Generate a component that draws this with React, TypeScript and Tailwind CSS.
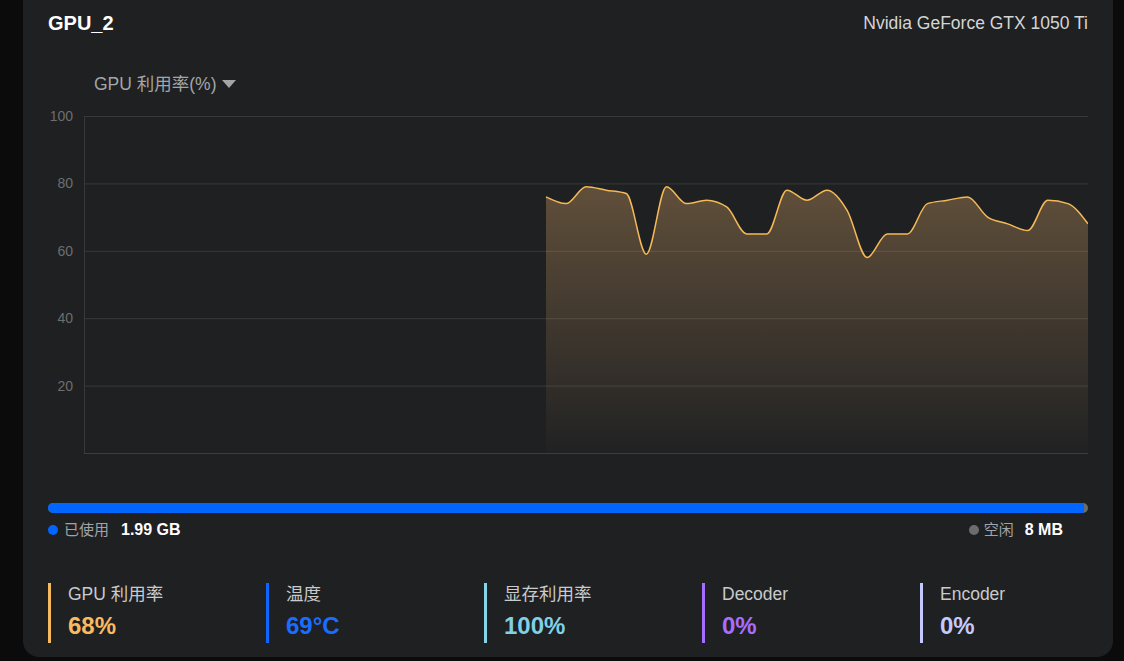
import React from "react";

const FONT = { fontFamily: '"Liberation Sans", Arial, "Noto Sans CJK SC", sans-serif' };

// GPU usage samples (%), newest on the right
const usage = [
    76, 74, 79, 78, 77, 59, 79, 74, 75, 73, 65, 65, 78, 75, 78, 72, 58, 65, 65, 74, 75, 76, 70, 68, 66, 75, 74, 68,
];

const W = 1040;
const H = 360;
const PLOT_L = 36;
const PLOT_T = 12;
const PLOT_B = 349;
const DATA_X0 = 498;

function yOf(v: number) {
    return PLOT_B - (v / 100) * (PLOT_B - PLOT_T);
}

// monotone cubic interpolation, same idea as d3.curveMonotoneX
function monotonePath(pts: [number, number][]) {
    const n = pts.length;
    const sign = (x: number) => (x < 0 ? -1 : 1);
    const t: number[] = new Array(n).fill(0);
    for (let i = 1; i < n - 1; i++) {
        const [x0, y0] = pts[i - 1];
        const [x1, y1] = pts[i];
        const [x2, y2] = pts[i + 1];
        const h0 = x1 - x0;
        const h1 = x2 - x1;
        const s0 = (y1 - y0) / h0;
        const s1 = (y2 - y1) / h1;
        const p = (s0 * h1 + s1 * h0) / (h0 + h1);
        t[i] = (sign(s0) + sign(s1)) * Math.min(Math.abs(s0), Math.abs(s1), 0.5 * Math.abs(p)) || 0;
    }
    const h = pts[1][0] - pts[0][0];
    t[0] = (3 * (pts[1][1] - pts[0][1]) / h - t[1]) / 2;
    const hl = pts[n - 1][0] - pts[n - 2][0];
    t[n - 1] = (3 * (pts[n - 1][1] - pts[n - 2][1]) / hl - t[n - 2]) / 2;

    let d = `M${pts[0][0]},${pts[0][1]}`;
    for (let i = 0; i < n - 1; i++) {
        const [x0, y0] = pts[i];
        const [x1, y1] = pts[i + 1];
        const dx = (x1 - x0) / 3;
        d += ` C${x0 + dx},${y0 + dx * t[i]} ${x1 - dx},${y1 - dx * t[i + 1]} ${x1},${y1}`;
    }
    return d;
}

function UsageChart() {
    const step = (W - DATA_X0) / (usage.length - 1);
    const pts: [number, number][] = usage.map((v, i) => [DATA_X0 + i * step, yOf(v)]);
    const line = monotonePath(pts);
    const area = `${line} L${W},${PLOT_B} L${DATA_X0},${PLOT_B} Z`;
    const ticks = [100, 80, 60, 40, 20];

    return (
        <svg width={W} height={H} className="block">
            <defs>
                <linearGradient id="fillGrad" gradientUnits="userSpaceOnUse" x1="0" y1="80" x2="0" y2={PLOT_B}>
                    <stop offset="0" stopColor="rgb(250,190,115)" stopOpacity="0.3" />
                    <stop offset="1" stopColor="rgb(250,190,115)" stopOpacity="0.01" />
                </linearGradient>
            </defs>
            {ticks.map((v) => (
                <g key={v}>
                    <line x1={PLOT_L} x2={W} y1={yOf(v) + 0.5} y2={yOf(v) + 0.5} stroke="#38393b" strokeWidth="1" />
                    <text x={25} y={yOf(v) + 5} textAnchor="end" fontSize="14" fill="#6c6e70" style={FONT}>
                        {v}
                    </text>
                </g>
            ))}
            <line x1={PLOT_L + 0.5} x2={PLOT_L + 0.5} y1={PLOT_T} y2={PLOT_B} stroke="#38393b" strokeWidth="1" />
            <line x1={PLOT_L} x2={W} y1={PLOT_B + 0.5} y2={PLOT_B + 0.5} stroke="#3c3d3f" strokeWidth="1" />
            <path d={area} fill="url(#fillGrad)" />
            <path d={line} fill="none" stroke="#f6b957" strokeWidth="1.5" />
        </svg>
    );
}

const stats = [
    { label: "GPU 利用率", value: "68%", border: "border-[#f6b95d]", text: "text-[#f9bb5f]" },
    { label: "温度", value: "69°C", border: "border-[#0f66ff]", text: "text-[#1a6dff]" },
    { label: "显存利用率", value: "100%", border: "border-[#85d4ea]", text: "text-[#80d0e8]" },
    { label: "Decoder", value: "0%", border: "border-[#a46cff]", text: "text-[#a86dff]" },
    { label: "Encoder", value: "0%", border: "border-[#c3c8ff]", text: "text-[#c3caff]" },
];

export default function App() {
    const usedPct = (1.99 * 1024) / (1.99 * 1024 + 8) * 100;

    return (
        <div className="h-[661px] overflow-hidden bg-[#0b0b0b] pl-[23px]" style={FONT}>
            <div className="w-[1090px] rounded-b-[16px] bg-[#1f2022] px-[25px] pt-[10px] pb-[14px]">
                {/* header */}
                <div className="flex h-[26px] items-center justify-between">
                    <span className="text-[20px] font-bold text-white">GPU_2</span>
                    <span className="text-[17.5px] text-[#d4d5d6]">Nvidia GeForce GTX 1050 Ti</span>
                </div>

                {/* chart */}
                <div className="mt-[36px] flex h-[24px] items-center pl-[46px] text-[17.5px] text-[#a3a5a7]">
                    <span>GPU 利用率(%)</span>
                    <svg width="16" height="10" viewBox="0 0 16 10" className="ml-[4px]">
                        <path d="M1 1 H15 L8 9 Z" fill="#a3a5a7" />
                    </svg>
                </div>
                <div className="mt-[8px]">
                    <UsageChart />
                </div>

                {/* memory bar */}
                <div className="mt-[39px] h-[10px] overflow-hidden rounded-full bg-[#6b6c6e]">
                    <div className="h-full bg-[#0066ff]" style={{ width: `${usedPct}%` }} />
                </div>
                <div className="mt-[7px] flex h-[20px] items-center justify-between">
                    <div className="flex items-center">
                        <span className="h-[10px] w-[10px] rounded-full bg-[#0066ff]" />
                        <span className="ml-[6px] text-[15px] text-[#a0a4a8]">已使用</span>
                        <span className="ml-[12px] text-[16px] font-bold text-white">1.99 GB</span>
                    </div>
                    <div className="flex items-center pr-[25px]">
                        <span className="h-[10px] w-[10px] rounded-full bg-[#6b6c6e]" />
                        <span className="ml-[5px] text-[15px] text-[#a0a4a8]">空闲</span>
                        <span className="ml-[11px] text-[16px] font-bold text-white">8 MB</span>
                    </div>
                </div>

                {/* stats */}
                <div className="mt-[43px] grid grid-cols-[218px_218px_218px_218px_1fr]">
                    {stats.map((s) => (
                        <div key={s.label} className={`h-[60px] border-l-[3px] pl-[17px] ${s.border}`}>
                            <div className="text-[17.5px] leading-[22px] text-[#c9cacc]">{s.label}</div>
                            <div className={`mt-[6px] text-[24px] leading-[30px] font-bold ${s.text}`}>{s.value}</div>
                        </div>
                    ))}
                </div>
            </div>
        </div>
    );
}
